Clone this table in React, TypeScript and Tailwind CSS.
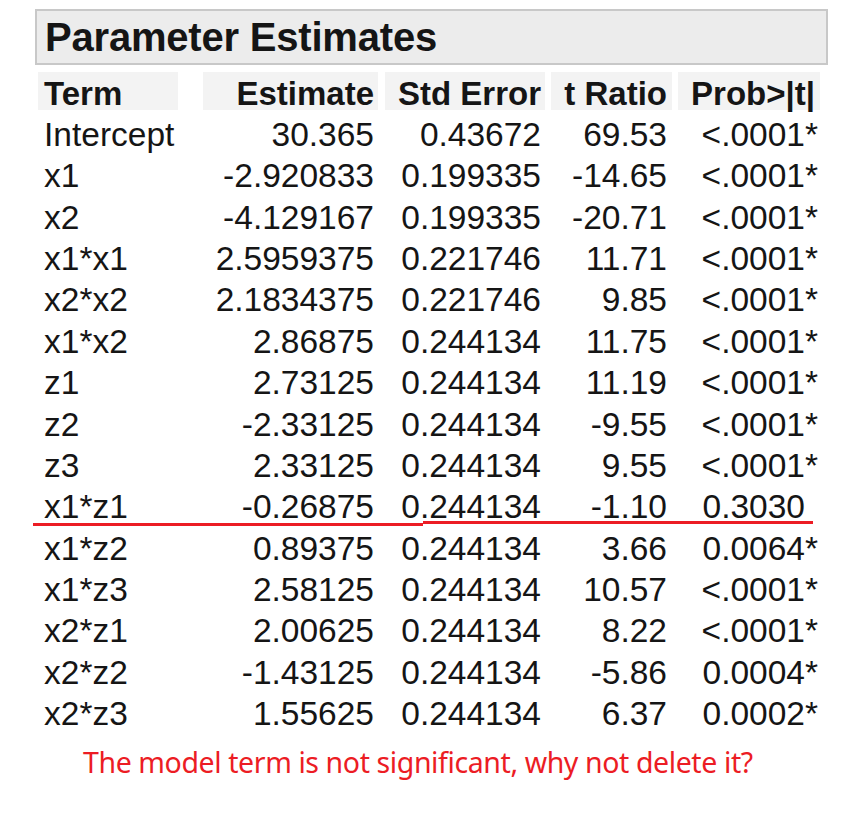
import React from 'react';

type Row = {
  term: string;
  est: string;
  se: string;
  t: string;
  p: string;
  sig: boolean;
};

const rows: Row[] = [
  {term: 'Intercept', est: '30.365', se: '0.43672', t: '69.53', p: '<.0001', sig: true},
  {term: 'x1', est: '-2.920833', se: '0.199335', t: '-14.65', p: '<.0001', sig: true},
  {term: 'x2', est: '-4.129167', se: '0.199335', t: '-20.71', p: '<.0001', sig: true},
  {term: 'x1*x1', est: '2.5959375', se: '0.221746', t: '11.71', p: '<.0001', sig: true},
  {term: 'x2*x2', est: '2.1834375', se: '0.221746', t: '9.85', p: '<.0001', sig: true},
  {term: 'x1*x2', est: '2.86875', se: '0.244134', t: '11.75', p: '<.0001', sig: true},
  {term: 'z1', est: '2.73125', se: '0.244134', t: '11.19', p: '<.0001', sig: true},
  {term: 'z2', est: '-2.33125', se: '0.244134', t: '-9.55', p: '<.0001', sig: true},
  {term: 'z3', est: '2.33125', se: '0.244134', t: '9.55', p: '<.0001', sig: true},
  {term: 'x1*z1', est: '-0.26875', se: '0.244134', t: '-1.10', p: '0.3030', sig: false},
  {term: 'x1*z2', est: '0.89375', se: '0.244134', t: '3.66', p: '0.0064', sig: true},
  {term: 'x1*z3', est: '2.58125', se: '0.244134', t: '10.57', p: '<.0001', sig: true},
  {term: 'x2*z1', est: '2.00625', se: '0.244134', t: '8.22', p: '<.0001', sig: true},
  {term: 'x2*z2', est: '-1.43125', se: '0.244134', t: '-5.86', p: '0.0004', sig: true},
  {term: 'x2*z3', est: '1.55625', se: '0.244134', t: '6.37', p: '0.0002', sig: true},
];

export default function App() {
  return (
    <div className="relative w-[852px] h-[828px] bg-white text-[#151515] font-['Liberation_Sans',Arial,sans-serif] overflow-hidden">
      {/* titre */}
      <div className="pt-[9px] pl-[35px]">
        <div className="w-[793px] h-[56px] border-2 border-[#c8c8c8] bg-[#ececec] pl-[8px] flex items-center">
          <span className="text-[40px] font-bold leading-none tracking-[-0.2px]">Parameter Estimates</span>
        </div>
      </div>

      {/* tableau */}
      <div className="pl-[38px] pt-[7px] text-[33.5px]">
        <div className="flex h-[38px] font-bold text-[33px] leading-[32px] pt-[6px]">
          <div className="w-[140px] bg-[#f3f3f3] pl-[6px] -mt-[6px] pt-[6px]">Term</div>
          <div className="ml-[25px] w-[175px] bg-[#f3f3f3] text-right pr-[4px] -mt-[6px] pt-[6px]">Estimate</div>
          <div className="ml-[7px] w-[160px] bg-[#f3f3f3] text-right pr-[4px] -mt-[6px] pt-[6px]">Std Error</div>
          <div className="ml-[6px] w-[121px] bg-[#f3f3f3] text-right pr-[5px] -mt-[6px] pt-[6px]">t Ratio</div>
          <div className="ml-[6px] w-[142px] bg-[#f3f3f3] text-right pr-[5px] -mt-[6px] pt-[6px]">Prob&gt;|t|</div>
        </div>
        <div className="pt-[4px]">
          {rows.map((r) => (
            <div key={r.term} className="flex h-[41.36px] leading-[41.36px] whitespace-nowrap">
              <div className="w-[140px] pl-[6px]">{r.term}</div>
              <div className="ml-[25px] w-[175px] text-right pr-[4px]">{r.est}</div>
              <div className="ml-[7px] w-[160px] text-right pr-[4px]">{r.se}</div>
              <div className="ml-[6px] w-[121px] text-right pr-[5px]">{r.t}</div>
              <div className="ml-[6px] w-[142px] flex justify-end pr-[5px]">
                <span>{r.p}</span>
                <span className="w-[10px] text-left">{r.sig ? '*' : ''}</span>
              </div>
            </div>
          ))}
        </div>
      </div>

      {/* trait rouge sur x1*z1 */}
      <div className="absolute left-[33px] top-[523px] w-[390px] h-[3px] bg-[#ec1c24]" />
      <div className="absolute left-[423px] top-[521px] w-[390px] h-[3px] bg-[#ec1c24]" />

      <p className="pl-[83px] pt-[10px] text-[28.5px] leading-[36px] tracking-[-0.4px] text-[#ec1c24] font-['Noto_Sans',sans-serif]">
        The model term is not significant, why not delete it?
      </p>
    </div>
  );
}
